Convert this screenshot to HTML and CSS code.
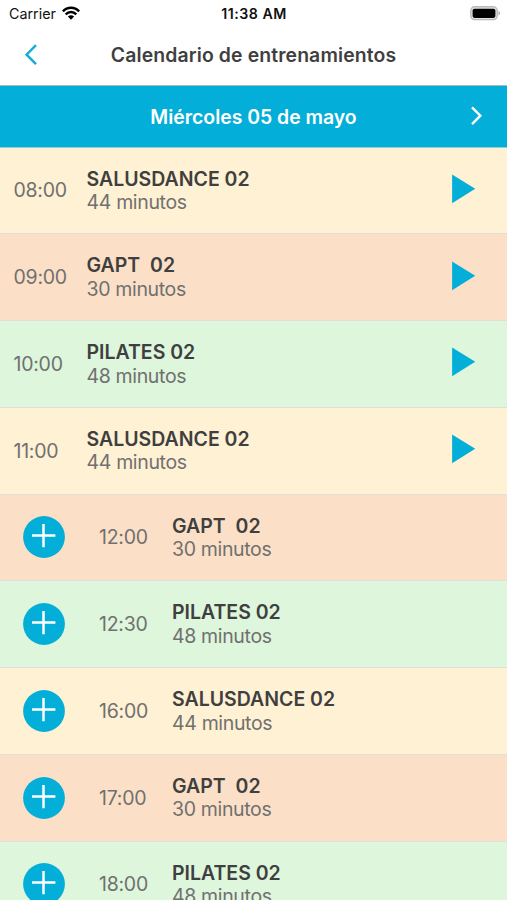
FILE: index.html
```html
<!DOCTYPE html>
<html lang="es">
<head>
<meta charset="utf-8">
<title>Calendario de entrenamientos</title>
<link rel="stylesheet" href="styles.css">
</head>
<body>
<svg width="0" height="0" class="defs" aria-hidden="true">
  <symbol id="play" viewBox="0 0 24 30"><path d="M0.1 0.5L23.2 14.8L0.1 29.2Z" fill="#03aed8"/></symbol>
  <symbol id="plus" viewBox="0 0 42 42"><circle cx="21" cy="21" r="20.9" fill="#03aed8"/><path d="M9 19.6H32.4M20.5 8V31.2" stroke="#fff" stroke-width="2.5" fill="none"/></symbol>
</svg>
<div class="status">
  <div class="carrier">Carrier
    <svg class="wifi" width="18" height="14" viewBox="0 0 18 14"><g fill="none" stroke="#000" stroke-width="2.5"><path d="M0.9 5.3C5.4 0.5 12.6 0.5 17.1 5.3"/><path d="M3.7 8.4C6.8 5.2 11.2 5.2 14.3 8.4"/></g><path d="M5.9 10.5C7.7 8.7 10.3 8.7 12.1 10.5L9 13.7Z"/></svg>
  </div>
  <div class="clock">11:38 AM</div>
  <svg class="battery" width="31" height="15" viewBox="0 0 31 15"><rect x="0.8" y="0.8" width="26.4" height="12.8" rx="3.8" fill="#e4e4e4" stroke="#b9b9b9" stroke-width="1.4"/><rect x="2.6" y="2.7" width="22.8" height="9.2" rx="1.8"/><path d="M28.5 5C30.5 5.7 30.5 8.7 28.5 9.4Z" fill="#aaa"/></svg>
</div>
<header class="nav">
  <svg class="back" width="14" height="22" viewBox="0 0 14 22"><path d="M12 1.2L2.6 10.7L12 20.2" fill="none" stroke="#1aabd6" stroke-width="2.5"/></svg>
  <h1>Calendario de entrenamientos</h1>
</header>
<div class="day">
  <h2>Miércoles 05 de mayo</h2>
  <svg class="next" width="12" height="20" viewBox="0 0 12 20"><path d="M1 1.3L9.4 9.7L1 18.1" fill="none" stroke="#fff" stroke-width="2.4"/></svg>
</div>
<main class="list">
  <div class="row cream"><time>08:00</time><div class="info"><b>SALUSDANCE 02</b><span>44 minutos</span></div><svg class="play"><use href="#play"/></svg></div>
  <div class="row peach"><time>09:00</time><div class="info"><b>GAPT  02</b><span>30 minutos</span></div><svg class="play"><use href="#play"/></svg></div>
  <div class="row mint"><time>10:00</time><div class="info"><b>PILATES 02</b><span>48 minutos</span></div><svg class="play"><use href="#play"/></svg></div>
  <div class="row cream"><time>11:00</time><div class="info"><b>SALUSDANCE 02</b><span>44 minutos</span></div><svg class="play"><use href="#play"/></svg></div>
  <div class="row peach"><svg class="add"><use href="#plus"/></svg><time>12:00</time><div class="info"><b>GAPT  02</b><span>30 minutos</span></div></div>
  <div class="row mint"><svg class="add"><use href="#plus"/></svg><time>12:30</time><div class="info"><b>PILATES 02</b><span>48 minutos</span></div></div>
  <div class="row cream"><svg class="add"><use href="#plus"/></svg><time>16:00</time><div class="info"><b>SALUSDANCE 02</b><span>44 minutos</span></div></div>
  <div class="row peach"><svg class="add"><use href="#plus"/></svg><time>17:00</time><div class="info"><b>GAPT  02</b><span>30 minutos</span></div></div>
  <div class="row mint"><svg class="add"><use href="#plus"/></svg><time>18:00</time><div class="info"><b>PILATES 02</b><span>48 minutos</span></div></div>
</main>
</body>
</html>
```
FILE: styles.css
```css
* { box-sizing: border-box; }
body {
  margin: 0;
  height: 900px;
  overflow: hidden;
  background: #fff;
  font-family: Inter, "Liberation Sans", sans-serif;
  color: #3f3f3f;
}
svg { display: block; flex: none; }
.defs { position: absolute; }
h1, h2 { margin: 0; white-space: nowrap; }
.status {
  display: grid;
  grid-template-columns: 1fr auto 1fr;
  align-items: center;
  height: 28px;
  padding: 0 6px 0 9px;
  color: #111;
}
.carrier { display: flex; align-items: center; gap: 6px; font-size: 14.3px; margin-top: -1px; }
.wifi { margin-top: -1px; }
.clock { font-size: 14.2px; font-weight: 600; letter-spacing: 0.5px; margin: -1px 2px 0 0; }
.battery { justify-self: end; margin-top: -1px; }
.nav, .day {
  display: grid;
  grid-template-columns: 1fr auto 1fr;
  align-items: center;
}
.nav { height: 57px; padding-bottom: 4px; }
.nav h1 { grid-column: 2; font-size: 19.4px; font-weight: 600; line-height: 24px; letter-spacing: 0.12px; }
.back { margin-left: 24px; }
.day {
  height: 62.5px;
  padding-top: 1px;
  border-top: 1px solid #a3bbc0;
  border-bottom: 1px solid #8ecfd2;
  background: #03aed8;
  color: #fff;
}
.day h2 { grid-column: 2; font-size: 19.4px; font-weight: 600; line-height: 24px; }
.next { justify-self: end; margin-right: 24px; margin-top: -2px; }
.row {
  display: flex;
  align-items: center;
  height: 86.75px;
  padding: 0 31px 0 13.5px;
  border-bottom: 1px solid #dfdfdb;
}
.cream { background: #fff1d3; }
.peach { background: #fbe0c7; }
.mint { background: #ddf6dc; }
.row time { flex: none; width: 73px; font-size: 19.5px; letter-spacing: -0.25px; color: #707070; }
.info { flex: 1; display: flex; flex-direction: column; white-space: pre; line-height: 24px; }
.info b { font-size: 19.5px; font-weight: 600; }
.info span { font-size: 19.5px; letter-spacing: -0.35px; margin-top: -0.5px; color: #707070; }
.play { width: 24px; height: 30px; margin-top: -3px; }
.add { width: 42px; height: 42px; margin: 0 34.5px 0 9px; }
```
